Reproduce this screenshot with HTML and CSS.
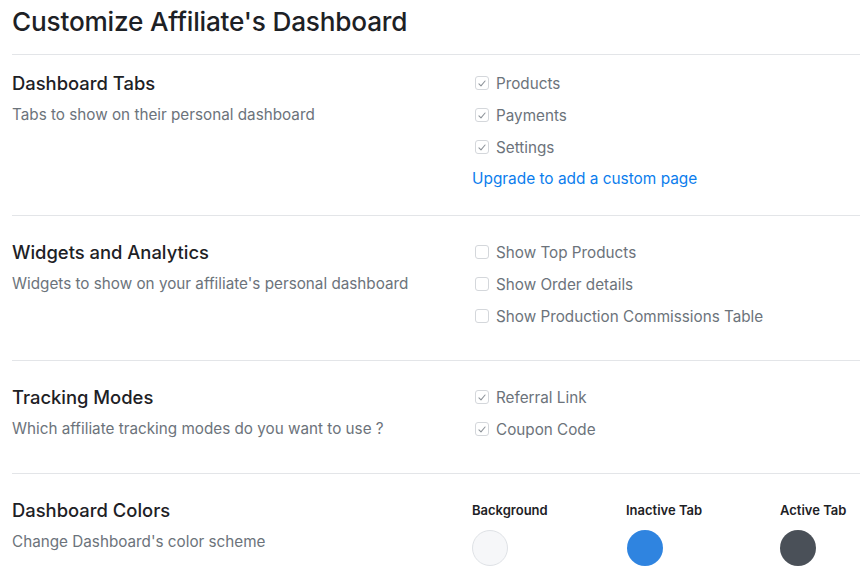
FILE: index.html
```html
<!DOCTYPE html>
<html>
<head>
<meta charset="utf-8">
<link rel="stylesheet" href="styles.css">
</head>
<body>
<div class="page">
  <h1 class="title">Customize Affiliate's Dashboard</h1>

  <section class="section section-first">
    <div class="info">
      <h2 class="heading">Dashboard Tabs</h2>
      <p class="desc">Tabs to show on their personal dashboard</p>
    </div>
    <div class="options">
      <label class="option"><span class="box checked"><svg viewBox="0 0 13 13" width="13" height="13"><path d="M3.2 6.8 L5.4 9 L9.8 3.8" fill="none" stroke="#8f959b" stroke-width="1.2" stroke-linecap="round" stroke-linejoin="round"/></svg></span>Products</label>
      <label class="option"><span class="box checked"><svg viewBox="0 0 13 13" width="13" height="13"><path d="M3.2 6.8 L5.4 9 L9.8 3.8" fill="none" stroke="#8f959b" stroke-width="1.2" stroke-linecap="round" stroke-linejoin="round"/></svg></span>Payments</label>
      <label class="option"><span class="box checked"><svg viewBox="0 0 13 13" width="13" height="13"><path d="M3.2 6.8 L5.4 9 L9.8 3.8" fill="none" stroke="#8f959b" stroke-width="1.2" stroke-linecap="round" stroke-linejoin="round"/></svg></span>Settings</label>
      <a class="upgrade" href="#">Upgrade to add a custom page</a>
    </div>
  </section>

  <section class="section">
    <div class="info">
      <h2 class="heading">Widgets and Analytics</h2>
      <p class="desc">Widgets to show on your affiliate's personal dashboard</p>
    </div>
    <div class="options">
      <label class="option"><span class="box"></span>Show Top Products</label>
      <label class="option"><span class="box"></span>Show Order details</label>
      <label class="option"><span class="box"></span>Show Production Commissions Table</label>
    </div>
  </section>

  <section class="section">
    <div class="info">
      <h2 class="heading">Tracking Modes</h2>
      <p class="desc">Which affiliate tracking modes do you want to use ?</p>
    </div>
    <div class="options">
      <label class="option"><span class="box checked"><svg viewBox="0 0 13 13" width="13" height="13"><path d="M3.2 6.8 L5.4 9 L9.8 3.8" fill="none" stroke="#8f959b" stroke-width="1.2" stroke-linecap="round" stroke-linejoin="round"/></svg></span>Referral Link</label>
      <label class="option"><span class="box checked"><svg viewBox="0 0 13 13" width="13" height="13"><path d="M3.2 6.8 L5.4 9 L9.8 3.8" fill="none" stroke="#8f959b" stroke-width="1.2" stroke-linecap="round" stroke-linejoin="round"/></svg></span>Coupon Code</label>
    </div>
  </section>

  <section class="section section-last">
    <div class="info">
      <h2 class="heading">Dashboard Colors</h2>
      <p class="desc">Change Dashboard's color scheme</p>
    </div>
    <div class="colors">
      <div class="color">
        <span class="color-label">Background</span>
        <span class="swatch swatch-bg"></span>
      </div>
      <div class="color">
        <span class="color-label">Inactive Tab</span>
        <span class="swatch swatch-inactive"></span>
      </div>
      <div class="color">
        <span class="color-label">Active Tab</span>
        <span class="swatch swatch-active"></span>
      </div>
    </div>
  </section>
</div>
</body>
</html>
```

FILE: styles.css
```css
* { box-sizing: border-box; }

html, body {
  margin: 0;
  padding: 0;
  background: #ffffff;
  overflow: hidden;
}

body {
  font-family: Inter, "Noto Sans", "Liberation Sans", sans-serif;
  color: #212529;
}

.page {
  padding-left: 12px;
  width: 860px;
}

.title {
  margin: 0;
  padding-top: 5px;
  font-size: 26.2px;
  line-height: 34px;
  font-weight: 500;
  color: #1d2125;
  height: 55px;
  border-bottom: 1px solid #e3e5e8;
  letter-spacing: -0.2px;
}

.section {
  display: grid;
  grid-template-columns: 460px 1fr;
  padding: 20px 0 28px;
  border-bottom: 1px solid #e3e5e8;
}

.section-first {
  padding: 12px 0 20px;
}

.section-last {
  border-bottom: none;
}

.heading {
  margin: 0;
  font-size: 18.4px;
  line-height: 32px;
  font-weight: 500;
  color: #1d2125;
}

.desc {
  margin: 0;
  font-size: 15.25px;
  line-height: 32px;
  color: #6c737b;
}

.options {
  display: flex;
  flex-direction: column;
}

.option {
  display: flex;
  align-items: center;
  height: 32px;
  font-size: 15.25px;
  color: #6c737b;
  padding-left: 3px;
}

.box {
  width: 14px;
  height: 14px;
  border: 1px solid #d4d7db;
  border-radius: 3px;
  margin-right: 7px;
  display: inline-flex;
  align-items: center;
  justify-content: center;
  background: #fff;
}

.box svg {
  display: block;
}

.upgrade {
  display: block;
  height: 32px;
  line-height: 32px;
  font-size: 15.4px;
  color: #0b7ded;
  text-decoration: none;
}

.colors {
  display: grid;
  grid-template-columns: 154px 154px 1fr;
  padding-top: 6px;
}

.color {
  display: flex;
  flex-direction: column;
  align-items: flex-start;
}

.color-label {
  font-size: 13px;
  line-height: 20px;
  font-weight: 600;
  color: #1d2125;
  margin-bottom: 10px;
}

.swatch {
  width: 36px;
  height: 36px;
  border-radius: 50%;
  display: block;
}

.swatch-bg {
  background: #f6f7f9;
  border: 1px solid #dfe2e6;
}

.swatch-inactive {
  background: #2f84e0;
  margin-left: 1px;
}

.swatch-active {
  background: #4a5058;
}
```
